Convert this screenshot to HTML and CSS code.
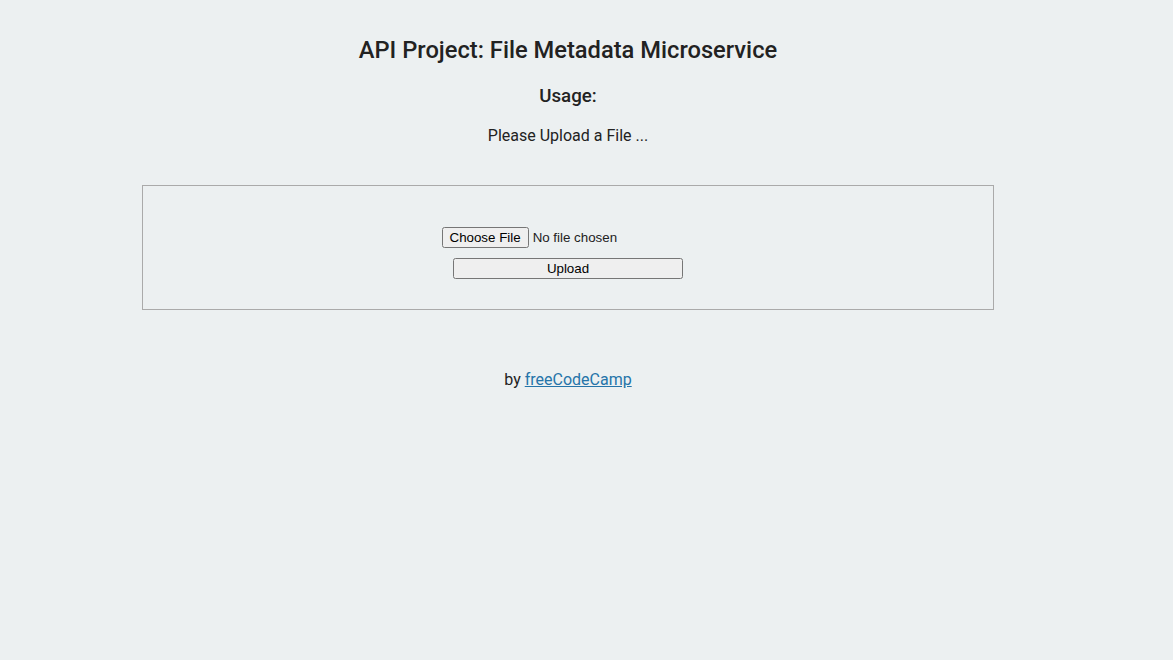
FILE: index.html
```html
<!DOCTYPE html>
<html lang="en">
<head>
<meta charset="utf-8">
<title>File Metadata Microservice</title>
<link rel="stylesheet" href="styles.css">
</head>
<body>
<div class="page">
  <div class="container">
    <h2 class="title">API Project: File Metadata Microservice</h2>
    <h3 class="subtitle">Usage:</h3>
    <p class="lead">Please Upload a File ...</p>
    <div class="view">
      <h4 class="output"></h4>
      <form class="upload-form" enctype="multipart/form-data" method="POST" action="#">
        <input class="file-input" type="file" name="upfile">
        <input class="submit-button" type="submit" value="Upload">
      </form>
    </div>
  </div>
  <div class="footer">
    <p class="credit">by <a class="credit-link" href="#">freeCodeCamp</a></p>
  </div>
</div>
</body>
</html>
```
FILE: styles.css
```css
html, body {
  margin: 0;
  padding: 0;
  background-color: #ECF0F1;
}
body {
  font-size: 16px;
  color: #222;
  text-align: center;
  font-family: Roboto, "Liberation Sans", sans-serif;
  font-weight: 400;
  line-height: 1.25;
}
.page {
  width: 1136px;
  padding-top: 16px;
}
.container {
  margin: 0;
}
.title {
  font-size: 23.7px;
  font-weight: 500;
  margin: 20px 0 19px;
}
.subtitle {
  font-size: 18.72px;
  font-weight: 500;
  margin: 18.72px 0 17.72px;
}
.lead {
  margin: 16px 0;
}
.view {
  margin: 39px auto 0;
  border: 1px solid #aaa;
  padding: 20px 20px 23px;
  width: 810px;
  min-height: 80px;
}
.output {
  margin: 21px 0;
}
.upload-form {
  display: flex;
  flex-direction: column;
  align-items: center;
  gap: 10px;
}
.file-input {
  font-family: "Liberation Sans", Arial, sans-serif;
  font-size: 13.33px;
  margin: 0;
}
.submit-button {
  font-family: "Liberation Sans", Arial, sans-serif;
  font-size: 13.33px;
  width: 230px;
  margin: 0;
}
.footer {
  margin-top: 60px;
}
.credit {
  margin: 16px 0;
}
.credit-link {
  color: #2574A9;
}
```
